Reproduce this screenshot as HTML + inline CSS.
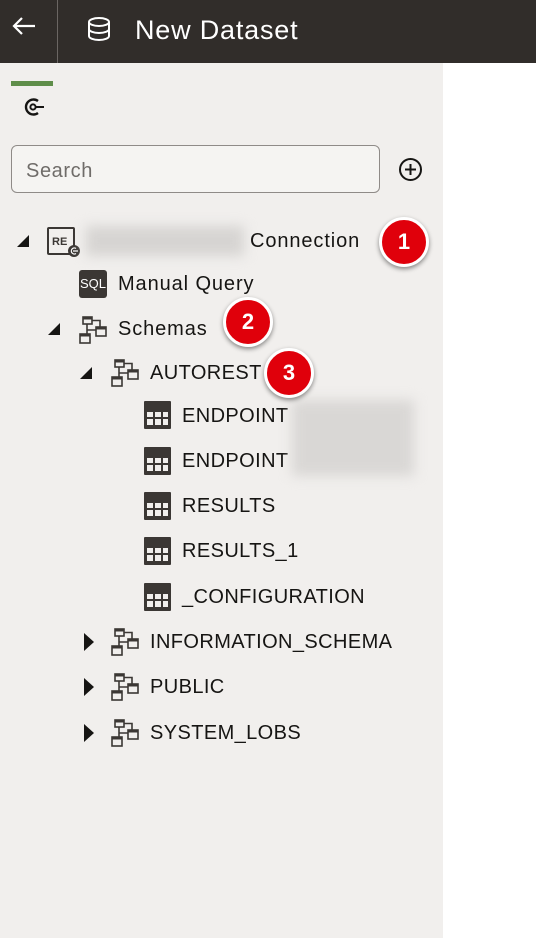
<!DOCTYPE html>
<html><head><meta charset="utf-8"><style>
*{margin:0;padding:0;box-sizing:border-box}
body{width:536px;height:938px;position:relative;background:#fff;font-family:"Liberation Sans",sans-serif;overflow:hidden;color:#161513}
.hdr{position:absolute;left:0;top:0;width:536px;height:63px;background:#312d2a}
.panel{position:absolute;left:0;top:63px;width:443px;height:875px;background:#f1efed}
.t{position:absolute;font-size:20px;line-height:24px;white-space:nowrap;color:#161513;letter-spacing:0.9px}
.u{letter-spacing:0.4px}
.ab{position:absolute}
.badge{position:absolute;width:50px;height:50px;border-radius:50%;background:#e0000b;border:3px solid #fff;box-shadow:0 2px 5px rgba(0,0,0,.45);color:#fff;font-size:22px;font-weight:bold;text-align:center;line-height:44px}
.blur{position:absolute;background:#d6d4d2;filter:blur(6px)}
</style></head><body>
<div class="hdr">
  <svg class="ab" style="left:11px;top:16px" width="26" height="20" viewBox="0 0 26 20"><path d="M3 10H24M11 2L3 10L11 18" stroke="#fff" stroke-width="2.2" fill="none"/></svg>
  <div class="ab" style="left:57px;top:0;width:1px;height:63px;background:#6b6663"></div>
  <svg class="ab" style="left:86px;top:16px" width="26" height="26" viewBox="0 0 26 26"><ellipse cx="13" cy="6" rx="10" ry="4" stroke="#fff" stroke-width="2" fill="none"/><path d="M3 6V20c0 2.2 4.5 4 10 4s10-1.8 10-4V6M3 13c0 2.2 4.5 4 10 4s10-1.8 10-4" stroke="#fff" stroke-width="2" fill="none"/></svg>
  <div class="t" style="left:135px;top:14px;font-size:27px;line-height:32px;color:#fff;letter-spacing:0.8px">New Dataset</div>
</div>
<div class="panel"></div>
<div class="ab" style="left:11px;top:81px;width:42px;height:5px;background:#5f8e4a"></div>
<svg class="ab" style="left:21px;top:96px" width="26" height="22" viewBox="0 0 26 22"><path d="M17 5A7.5 7.5 0 1 0 17 17" stroke="#161513" stroke-width="2.4" fill="none"/><circle cx="12" cy="11" r="2.6" stroke="#161513" stroke-width="2" fill="none"/><path d="M14.5 11H23" stroke="#161513" stroke-width="2"/></svg>
<div class="ab" style="left:11px;top:145px;width:369px;height:48px;border:1.5px solid #8f8b88;border-radius:6px;background:#f5f4f2"></div>
<div class="t" style="left:26px;top:159px;color:#6f6c69;letter-spacing:0.6px">Search</div>
<svg class="ab" style="left:398px;top:157px" width="25" height="25" viewBox="0 0 25 25"><circle cx="12.5" cy="12.5" r="10.5" stroke="#161513" stroke-width="2" fill="none"/><path d="M12.5 7V18M7 12.5H18" stroke="#161513" stroke-width="2"/></svg>

<svg class="ab" style="left:16px;top:234px" width="14" height="14"><path d="M13 1V13H1Z" fill="#161513"/></svg>
<svg class="ab" style="left:47px;top:322px" width="14" height="14"><path d="M13 1V13H1Z" fill="#161513"/></svg>
<svg class="ab" style="left:79px;top:366px" width="14" height="14"><path d="M13 1V13H1Z" fill="#161513"/></svg>
<svg class="ab" style="left:83px;top:632px" width="12" height="20"><path d="M1 1L11 10L1 19Z" fill="#161513"/></svg>
<svg class="ab" style="left:83px;top:677px" width="12" height="20"><path d="M1 1L11 10L1 19Z" fill="#161513"/></svg>
<svg class="ab" style="left:83px;top:723px" width="12" height="20"><path d="M1 1L11 10L1 19Z" fill="#161513"/></svg>

<svg class="ab" style="left:46px;top:226px" width="36" height="32" viewBox="0 0 36 32"><rect x="2" y="2" width="26" height="26" rx="1" stroke="#3b3734" stroke-width="2" fill="none"/><text x="6" y="19" font-family="Liberation Sans" font-weight="bold" font-size="11" fill="#3b3734">RE</text><circle cx="28" cy="25" r="6" fill="#3b3734"/><path d="M30 22.5A3 3 0 1 0 30 27.5M27 25H32" stroke="#fff" stroke-width="1.2" fill="none"/></svg>
<div class="blur" style="left:86px;top:226px;width:158px;height:30px"></div>
<div class="t" style="left:250px;top:229px">Connection</div>

<div class="ab" style="left:79px;top:270px;width:28px;height:28px;background:#3b3734;border-radius:3px;color:#fff;font-size:13px;line-height:28px;text-align:center">SQL</div>
<div class="t" style="left:118px;top:272px">Manual Query</div>

<svg class="ab" style="left:79px;top:316px" width="29" height="29" viewBox="0 0 29 29"><g stroke="#3b3734" stroke-width="1.6" fill="none"><rect x="4" y="1" width="9" height="7"/><rect x="1" y="18" width="10" height="9"/><rect x="17" y="11" width="10" height="9"/><path d="M8 8V18M13 4.5H21V11M8 14H17"/></g><rect x="4" y="1" width="9" height="2.5" fill="#3b3734"/><rect x="1" y="18" width="10" height="2.5" fill="#3b3734"/><rect x="17" y="11" width="10" height="2.5" fill="#3b3734"/></svg>
<div class="t" style="left:118px;top:317px">Schemas</div>

<svg class="ab" style="left:111px;top:359px" width="29" height="29" viewBox="0 0 29 29"><g stroke="#3b3734" stroke-width="1.6" fill="none"><rect x="4" y="1" width="9" height="7"/><rect x="1" y="18" width="10" height="9"/><rect x="17" y="11" width="10" height="9"/><path d="M8 8V18M13 4.5H21V11M8 14H17"/></g><rect x="4" y="1" width="9" height="2.5" fill="#3b3734"/><rect x="1" y="18" width="10" height="2.5" fill="#3b3734"/><rect x="17" y="11" width="10" height="2.5" fill="#3b3734"/></svg>
<div class="t u" style="left:150px;top:361px">AUTOREST</div>

<svg class="ab" style="left:144px;top:401px" width="27" height="28" viewBox="0 0 27 28"><rect x="0" y="0" width="27" height="28" rx="1" fill="#3b3734"/><g fill="#f1efed"><rect x="3" y="11" width="6" height="5"/><rect x="11" y="11" width="6" height="5"/><rect x="19" y="11" width="5" height="5"/><rect x="3" y="18" width="6" height="6"/><rect x="11" y="18" width="6" height="6"/><rect x="19" y="18" width="5" height="6"/></g></svg>
<div class="t u" style="left:182px;top:404px">ENDPOINT</div>
<svg class="ab" style="left:144px;top:447px" width="27" height="28" viewBox="0 0 27 28"><rect x="0" y="0" width="27" height="28" rx="1" fill="#3b3734"/><g fill="#f1efed"><rect x="3" y="11" width="6" height="5"/><rect x="11" y="11" width="6" height="5"/><rect x="19" y="11" width="5" height="5"/><rect x="3" y="18" width="6" height="6"/><rect x="11" y="18" width="6" height="6"/><rect x="19" y="18" width="5" height="6"/></g></svg>
<div class="t u" style="left:182px;top:449px">ENDPOINT</div>
<div class="blur" style="left:292px;top:400px;width:122px;height:76px;background:#d9d7d5"></div>
<svg class="ab" style="left:144px;top:492px" width="27" height="28" viewBox="0 0 27 28"><rect x="0" y="0" width="27" height="28" rx="1" fill="#3b3734"/><g fill="#f1efed"><rect x="3" y="11" width="6" height="5"/><rect x="11" y="11" width="6" height="5"/><rect x="19" y="11" width="5" height="5"/><rect x="3" y="18" width="6" height="6"/><rect x="11" y="18" width="6" height="6"/><rect x="19" y="18" width="5" height="6"/></g></svg>
<div class="t u" style="left:182px;top:494px">RESULTS</div>
<svg class="ab" style="left:144px;top:537px" width="27" height="28" viewBox="0 0 27 28"><rect x="0" y="0" width="27" height="28" rx="1" fill="#3b3734"/><g fill="#f1efed"><rect x="3" y="11" width="6" height="5"/><rect x="11" y="11" width="6" height="5"/><rect x="19" y="11" width="5" height="5"/><rect x="3" y="18" width="6" height="6"/><rect x="11" y="18" width="6" height="6"/><rect x="19" y="18" width="5" height="6"/></g></svg>
<div class="t u" style="left:182px;top:539px">RESULTS_1</div>
<svg class="ab" style="left:144px;top:583px" width="27" height="28" viewBox="0 0 27 28"><rect x="0" y="0" width="27" height="28" rx="1" fill="#3b3734"/><g fill="#f1efed"><rect x="3" y="11" width="6" height="5"/><rect x="11" y="11" width="6" height="5"/><rect x="19" y="11" width="5" height="5"/><rect x="3" y="18" width="6" height="6"/><rect x="11" y="18" width="6" height="6"/><rect x="19" y="18" width="5" height="6"/></g></svg>
<div class="t u" style="left:182px;top:585px">_CONFIGURATION</div>

<svg class="ab" style="left:111px;top:628px" width="29" height="29" viewBox="0 0 29 29"><g stroke="#3b3734" stroke-width="1.6" fill="none"><rect x="4" y="1" width="9" height="7"/><rect x="1" y="18" width="10" height="9"/><rect x="17" y="11" width="10" height="9"/><path d="M8 8V18M13 4.5H21V11M8 14H17"/></g><rect x="4" y="1" width="9" height="2.5" fill="#3b3734"/><rect x="1" y="18" width="10" height="2.5" fill="#3b3734"/><rect x="17" y="11" width="10" height="2.5" fill="#3b3734"/></svg>
<div class="t u" style="left:150px;top:630px">INFORMATION_SCHEMA</div>
<svg class="ab" style="left:111px;top:673px" width="29" height="29" viewBox="0 0 29 29"><g stroke="#3b3734" stroke-width="1.6" fill="none"><rect x="4" y="1" width="9" height="7"/><rect x="1" y="18" width="10" height="9"/><rect x="17" y="11" width="10" height="9"/><path d="M8 8V18M13 4.5H21V11M8 14H17"/></g><rect x="4" y="1" width="9" height="2.5" fill="#3b3734"/><rect x="1" y="18" width="10" height="2.5" fill="#3b3734"/><rect x="17" y="11" width="10" height="2.5" fill="#3b3734"/></svg>
<div class="t u" style="left:150px;top:675px">PUBLIC</div>
<svg class="ab" style="left:111px;top:719px" width="29" height="29" viewBox="0 0 29 29"><g stroke="#3b3734" stroke-width="1.6" fill="none"><rect x="4" y="1" width="9" height="7"/><rect x="1" y="18" width="10" height="9"/><rect x="17" y="11" width="10" height="9"/><path d="M8 8V18M13 4.5H21V11M8 14H17"/></g><rect x="4" y="1" width="9" height="2.5" fill="#3b3734"/><rect x="1" y="18" width="10" height="2.5" fill="#3b3734"/><rect x="17" y="11" width="10" height="2.5" fill="#3b3734"/></svg>
<div class="t u" style="left:150px;top:721px">SYSTEM_LOBS</div>

<div class="badge" style="left:379px;top:217px">1</div>
<div class="badge" style="left:223px;top:297px">2</div>
<div class="badge" style="left:264px;top:348px">3</div>
</body></html>
